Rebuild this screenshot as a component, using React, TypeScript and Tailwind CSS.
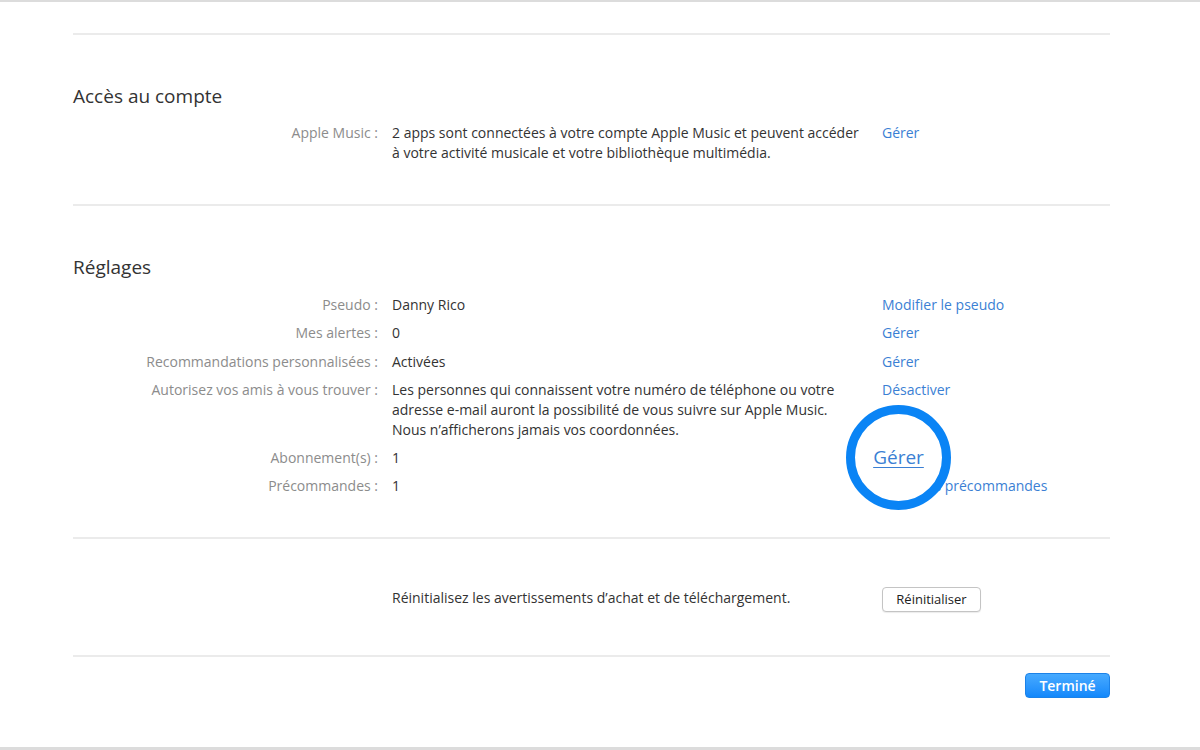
const rows = [
  { label: 'Pseudo :', value: ['Danny Rico'], link: 'Modifier le pseudo' },
  { label: 'Mes alertes :', value: ['0'], link: 'Gérer' },
  { label: 'Recommandations personnalisées :', value: ['Activées'], link: 'Gérer' },
  {
    label: 'Autorisez vos amis à vous trouver :',
    value: [
      'Les personnes qui connaissent votre numéro de téléphone ou votre',
      'adresse e-mail auront la possibilité de vous suivre sur Apple Music.',
      'Nous n’afficherons jamais vos coordonnées.',
    ],
    link: 'Désactiver',
  },
  { label: 'Abonnement(s) :', value: ['1'], link: 'Gérer', circled: true },
  { label: 'Précommandes :', value: ['1'], link: 'Gérer les précommandes' },
];

const Divider = () => <div className="h-[2px] bg-[#ebebeb]" />;

const Row = ({ label, value, link, circled }: { label: string; value: string[]; link: string; circled?: boolean }) => (
  <div className="flex leading-[20px]">
    <div className="w-[305px] shrink-0 text-right text-[#8c8c8c] whitespace-nowrap">{label}</div>
    <div className="w-[504px] shrink-0 pl-[14px] text-[#333] whitespace-nowrap">
      {value.map((v, i) => (
        <div key={i}>{v}</div>
      ))}
    </div>
    <div className="relative text-[#3b7fd4] whitespace-nowrap">
      {circled ? (
        <>
          <span className="invisible">{link}</span>
          {/* highlight ring over the subscriptions link */}
          <div className="absolute z-10 left-[-36px] top-[-43px] w-[105px] h-[105px] rounded-full border-[9px] border-[#0a84f5] bg-white flex items-center justify-center">
            <span className="text-[19px] underline underline-offset-[3px] text-[#3b7fd4] mt-[-2px]">{link}</span>
          </div>
        </>
      ) : (
        link
      )}
    </div>
  </div>
);

export default function App() {
  return (
    <div className="w-[1200px] h-[750px] bg-white border-t-2 border-b-[3px] border-[#dcdcdc] text-[14px] font-['Open_Sans',sans-serif] overflow-hidden">
      <div className="ml-[73px] w-[1037px] pt-[31px]">
        <Divider />

        <h2 className="mt-[49px] text-[19px] leading-[24px] text-[#333]">Accès au compte</h2>
        <div className="mt-[15px] flex leading-[20px]">
          <div className="w-[305px] shrink-0 text-right text-[#8c8c8c]">Apple Music :</div>
          <div className="w-[504px] shrink-0 pl-[14px] text-[#333] whitespace-nowrap">
            <div>2 apps sont connectées à votre compte Apple Music et peuvent accéder</div>
            <div>à votre activité musicale et votre bibliothèque multimédia.</div>
          </div>
          <div className="text-[#3b7fd4]">Gérer</div>
        </div>

        <div className="mt-[41px]">
          <Divider />
        </div>

        <h2 className="mt-[49px] text-[19px] leading-[24px] text-[#333]">Réglages</h2>
        <div className="mt-[16px] flex flex-col gap-[8.3px]">
          {rows.map((r) => (
            <Row key={r.label} {...r} />
          ))}
        </div>

        <div className="mt-[41px]">
          <Divider />
        </div>

        <div className="mt-[48px] flex items-center">
          <div className="w-[305px] shrink-0" />
          <div className="w-[504px] shrink-0 pl-[14px] text-[#333] leading-[20px] mt-[-4px]">
            Réinitialisez les avertissements d’achat et de téléchargement.
          </div>
          <button className="w-[99px] h-[25px] rounded-[4px] border border-[#c4c4c4] bg-white text-[13px] text-[#222] shadow-[0_1px_1px_rgba(0,0,0,0.08)]">
            Réinitialiser
          </button>
        </div>

        <div className="mt-[43px]">
          <Divider />
        </div>

        <div className="mt-[16px] flex justify-end">
          <button className="w-[85px] h-[25px] rounded-[4px] border border-[#1c82e8] bg-gradient-to-b from-[#46aaff] to-[#1188fb] text-[14px] font-semibold text-white">
            Terminé
          </button>
        </div>
      </div>
    </div>
  );
}
